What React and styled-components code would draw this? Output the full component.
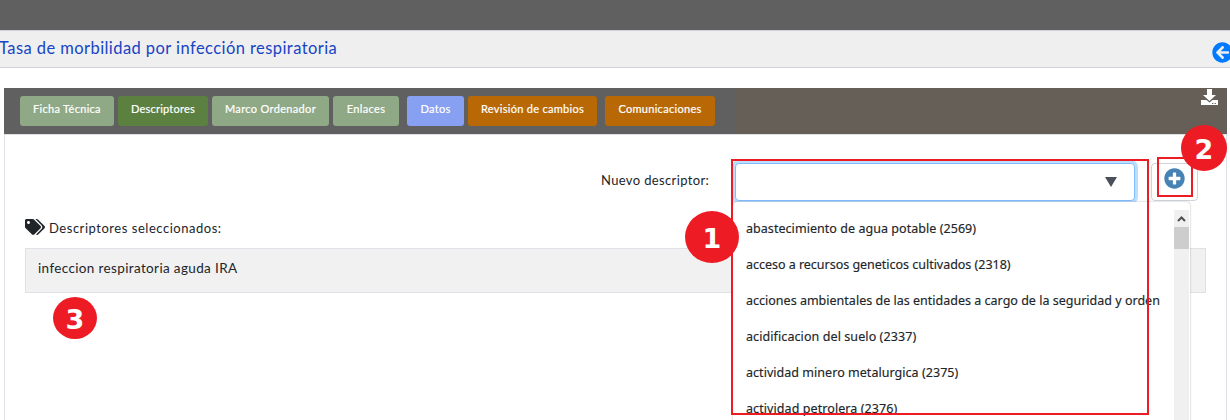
import React from "react";
import styled, { createGlobalStyle } from "styled-components";
import { FaArrowCircleLeft, FaTags, FaPlusCircle } from "react-icons/fa";

const Global = createGlobalStyle`
  * { box-sizing: border-box; }
  body { margin: 0; overflow: hidden; background: #fff; color: #212529; font-family: Lato, sans-serif; }
`;

const Page = styled.div`
  position: relative;
  width: 1230px;
  height: 420px;
  overflow: hidden;
`;
const TopBar = styled.div`
  height: 30px;
  background: #606060;
`;
const TitleBar = styled.header`
  height: 38px;
  display: flex;
  justify-content: space-between;
  background: #efefef;
  border: solid #d0d0d8;
  border-width: 1px 0;
`;
const Title = styled.h1`
  margin: 0 0 0 -1px;
  font-size: 16.5px;
  font-weight: 400;
  line-height: 35px;
  letter-spacing: 0.43px;
  color: #1744c4;
  white-space: nowrap;
`;
const BackButton = styled.a`
  margin: 11px -3px 0 0;
  height: 21px;
  font-size: 21px;
  line-height: 0;
  color: #007bff;
`;
const Panel = styled.main`
  width: 1223px;
  height: 400px;
  margin: 20px 0 0 4px;
`;
const Toolbar = styled.nav`
  height: 46px;
  display: flex;
  align-items: flex-start;
  padding: 8px 10px 0 16px;
  background: linear-gradient(to right, #606060 731px, #655f58 731px);
`;
const tones = { soft: "#8fa885", active: "#5b8040", blue: "#88a0f2", orange: "#b86905" };
const Tab = styled.button`
  width: ${(p) => p.$w}px;
  height: 30px;
  margin: 0 ${(p) => p.$gap ?? 4}px 0 0;
  padding: 0 0 4px;
  border: 0;
  border-radius: 3px;
  background: ${(p) => tones[p.$tone]};
  color: #fff;
  font: 400 11px/26px Lato, sans-serif;
  letter-spacing: ${(p) => p.$ls ?? 0}px;
  -webkit-text-stroke: 0.2px #fff;
  white-space: nowrap;
`;
const Download = styled.span`
  margin: -7px -1px 0 auto;
  height: 17px;
  line-height: 0;
`;
const Body = styled.section`
  height: 354px;
  padding: 28px 20px 0;
  border: solid #dee2e6;
  border-width: 1px 1px 0;
`;
const Field = styled.div`
  display: flex;
  height: 38px;
  padding-left: 575px;
`;
const Label = styled.label`
  width: 135px;
  padding-left: 1px;
  font-size: 13px;
  line-height: 35px;
  letter-spacing: 0.36px;
`;
const Select = styled.div`
  width: 400px;
  height: 38px;
  display: flex;
  align-items: center;
  justify-content: flex-end;
  padding-right: 17px;
  border: 1px solid #80bdff;
  border-radius: 4px;
  background: #fff;
  box-shadow: 0 0 0 3px #bfdeff;
`;
const Caret = styled.span`
  border: solid transparent;
  border-width: 10px 6px 0;
  border-top-color: #495057;
`;
const AddButton = styled.button`
  width: 47px;
  height: 38px;
  margin-left: 16px;
  padding: 0 0 8px;
  display: flex;
  align-items: center;
  justify-content: center;
  border: 1px solid #ced4da;
  border-radius: 4px;
  background: #fff;
  color: #4682b4;
  font-size: 21px;
`;
const Heading = styled.div`
  display: flex;
  align-items: center;
  height: 20px;
  margin-top: 17px;
  font-size: 13px;
  letter-spacing: 0.53px;
  svg { margin-right: 4px; margin-top: -2px; }
`;
const Selected = styled.div`
  width: 1181px;
  height: 45px;
  margin-top: 10px;
  padding: 0 12px;
  border: 1px solid #dee2e6;
  background: #f1f1f1;
  font-size: 13.5px;
  line-height: 39px;
  letter-spacing: 0.36px;
`;
const Menu = styled.div`
  position: absolute;
  left: 733px;
  top: 202px;
  width: 457px;
  height: 230px;
  display: flex;
  padding-top: 8px;
  background: #fff;
  border-radius: 4px;
  box-shadow: 0 0 2px rgba(0, 0, 0, 0.35);
`;
const Options = styled.ul`
  width: 441px;
  margin: 0;
  padding: 1px 0 0 13px;
  list-style: none;
`;
const Option = styled.li`
  height: 36px;
  font: 400 12.5px/36px "Noto Sans", sans-serif;
  letter-spacing: ${(p) => p.$ls}px;
  color: #212529;
  -webkit-text-stroke: 0.15px #212529;
  white-space: nowrap;
`;
const Scroll = styled.div`
  width: 15px;
  background: #f0f0f0;
  display: flex;
  flex-direction: column;
  align-items: center;
  svg { height: 17px; }
`;
const Thumb = styled.div`
  width: 15px;
  height: 22px;
  background: #cdcdcd;
`;
const Frame = styled.div`
  position: absolute;
  left: ${(p) => p.$x}px;
  top: ${(p) => p.$y}px;
  width: ${(p) => p.$w}px;
  height: ${(p) => p.$h}px;
  border: 2px solid #ed1c24;
`;
const Badge = styled.div`
  position: absolute;
  left: ${(p) => p.$x}px;
  top: ${(p) => p.$y}px;
  width: ${(p) => p.$w}px;
  height: ${(p) => p.$h}px;
  display: flex;
  align-items: center;
  justify-content: center;
  padding-top: ${(p) => p.$pt ?? 0}px;
  border-radius: 50%;
  background: #ed1c24;
  color: #fff;
  font: 700 ${(p) => p.$size ?? 27}px/1 "DejaVu Sans", sans-serif;
`;

const tabs = [
  ["Ficha Técnica", "soft", 94, 4, 0.3],
  ["Descriptores", "active", 90, 4, 0.2],
  ["Marco Ordenador", "soft", 117, 4, 0.34],
  ["Enlaces", "soft", 66, 8, 0.35],
  ["Datos", "blue", 57, 4, 0.3],
  ["Revisión de cambios", "orange", 129, 8, 0.3],
  ["Comunicaciones", "orange", 110, 4, 0.3],
];
const options = [
  ["abastecimiento de agua potable (2569)", 0.05],
  ["acceso a recursos geneticos cultivados (2318)", -0.02],
  ["acciones ambientales de las entidades a cargo de la seguridad y orden", 0.01],
  ["acidificacion del suelo (2337)", 0.09],
  ["actividad minero metalurgica (2375)", 0.04],
  ["actividad petrolera (2376)", 0.08],
];

export default function App() {
  return (
    <Page>
      <Global />
      <TopBar />
      <TitleBar>
        <Title>Tasa de morbilidad por infección respiratoria</Title>
        <BackButton><FaArrowCircleLeft /></BackButton>
      </TitleBar>
      <Panel>
        <Toolbar>
          {tabs.map(([t, tone, w, gap, ls]) => (
            <Tab key={t} $tone={tone} $w={w} $gap={gap} $ls={ls}>{t}</Tab>
          ))}
          <Download>
            <svg width="17" height="16" viewBox="0 0 17 16" fill="#fff">
              <path d="M6 0h5v6h4L8.5 12 2 6h4z" />
              <path d="M0 11h5.5l3 2.6 3-2.6H17v5H0z" />
              <path d="M11 14h1.3v1H11zM13.6 14h1.3v1h-1.3z" fill="#655f58" />
            </svg>
          </Download>
        </Toolbar>
        <Body>
          <Field>
            <Label>Nuevo descriptor:</Label>
            <Select><Caret /></Select>
            <AddButton><FaPlusCircle /></AddButton>
          </Field>
          <Heading><FaTags size={20} />Descriptores seleccionados:</Heading>
          <Selected>infeccion respiratoria aguda IRA</Selected>
        </Body>
      </Panel>
      <Menu>
        <Options>
          {options.map(([o, ls]) => <Option key={o} $ls={ls}>{o}</Option>)}
        </Options>
        <Scroll>
          <svg width="9" height="17" viewBox="0 0 9 17"><path d="M1 11 4.5 7.5 8 11" fill="none" stroke="#505050" strokeWidth="2" /></svg>
          <Thumb />
        </Scroll>
      </Menu>
      <Frame $x={731} $y={159} $w={418} $h={256} />
      <Frame $x={1157} $y={157} $w={36} $h={40} />
      <Badge $x={685} $y={211} $w={54} $h={52} $pt={2}>1</Badge>
      <Badge $x={1181} $y={125} $w={46} $h={46} $pt={3}>2</Badge>
      <Badge $x={53} $y={297} $w={44} $h={42} $pt={3}>3</Badge>
    </Page>
  );
}
